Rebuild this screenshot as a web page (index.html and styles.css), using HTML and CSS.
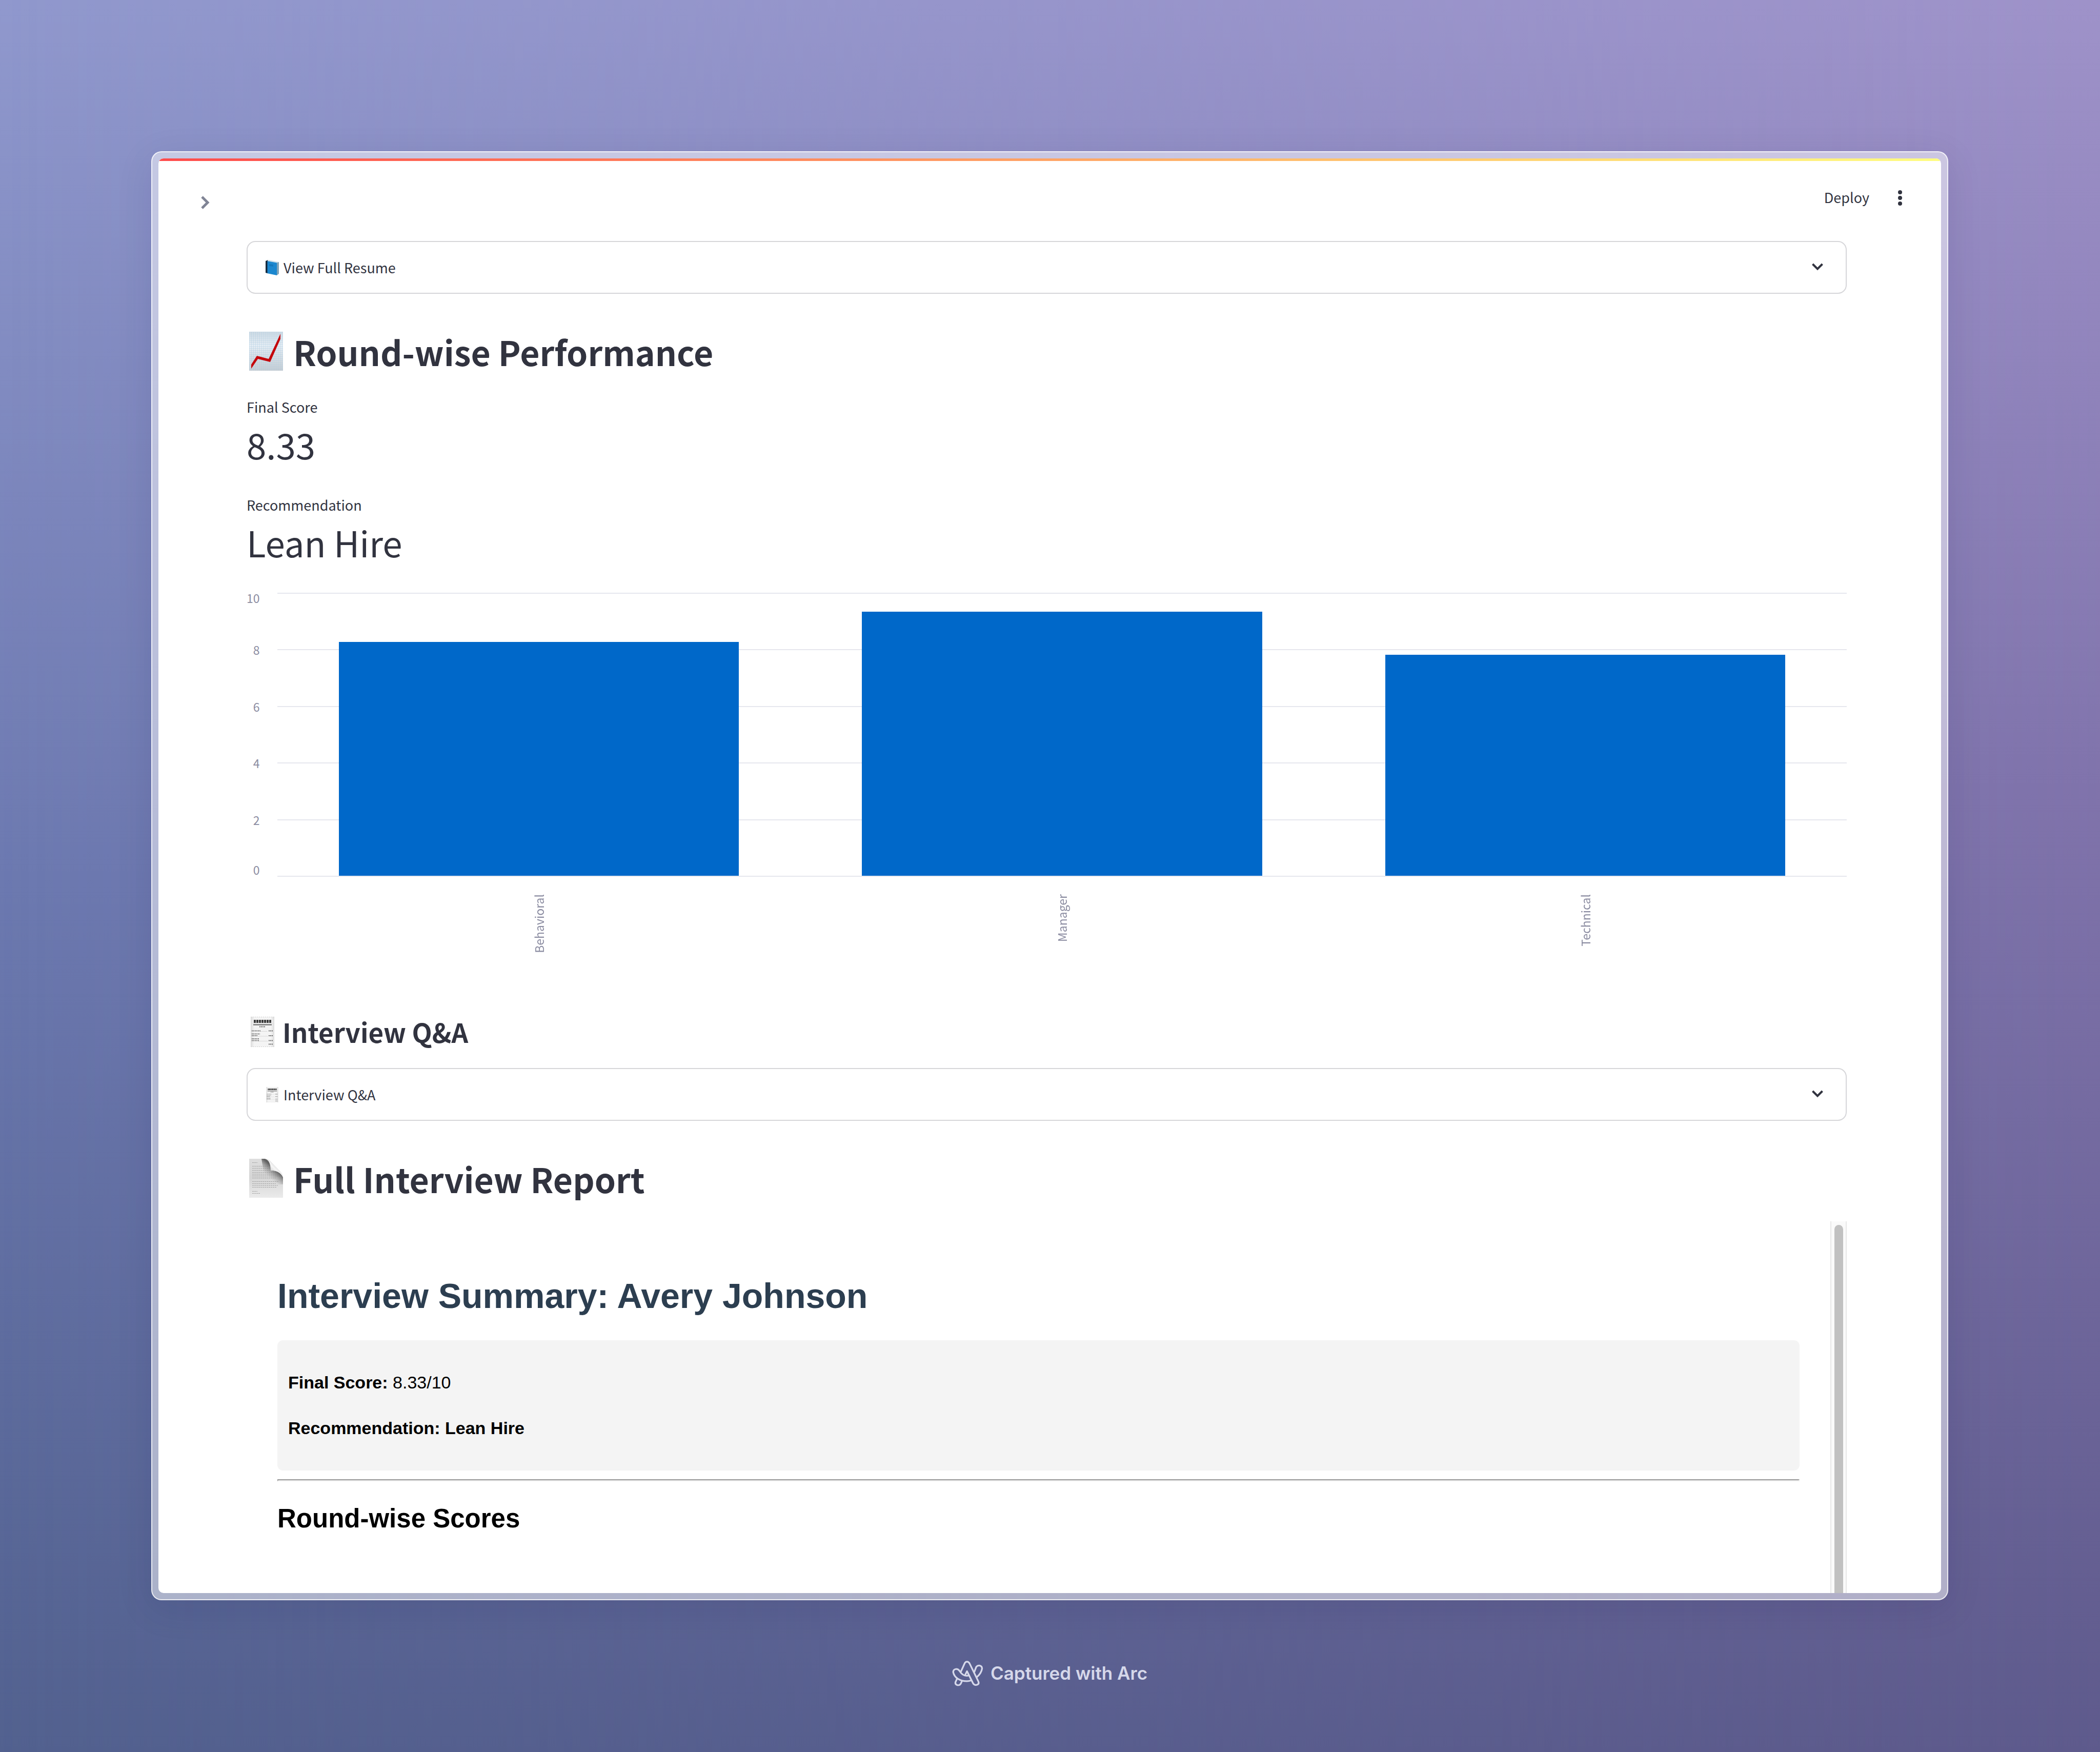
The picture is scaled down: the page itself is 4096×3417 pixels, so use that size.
FILE: index.html
```html
<!DOCTYPE html>
<html lang="en">
<head>
<meta charset="utf-8">
<title>Interview Report</title>
<link rel="stylesheet" href="styles.css">
</head>
<body class="backdrop">
<svg class="defs" aria-hidden="true">
  <defs>
    <linearGradient id="paper" x1="0" y1="0" x2="0" y2="1"><stop offset="0" stop-color="#dedede"/><stop offset=".5" stop-color="#d6d6d6"/><stop offset="1" stop-color="#ebebeb"/></linearGradient>
    <linearGradient id="grid-paper" x1="0" y1="0" x2="0" y2="1"><stop offset="0" stop-color="#cfdbe4"/><stop offset=".35" stop-color="#e6eef5"/><stop offset="1" stop-color="#c6cdd3"/></linearGradient>
    <linearGradient id="slip" x1="0" y1="0" x2="1" y2="0"><stop offset="0" stop-color="#dcdcdc"/><stop offset=".15" stop-color="#f4f4f4"/><stop offset=".85" stop-color="#f4f4f4"/><stop offset="1" stop-color="#dcdcdc"/></linearGradient>
    <linearGradient id="fold" x1="42" y1="23" x2="53" y2="12" gradientUnits="userSpaceOnUse"><stop offset="0" stop-color="#d4d4d4"/><stop offset=".5" stop-color="#f6f6f6"/><stop offset="1" stop-color="#dcdcdc"/></linearGradient>
    <linearGradient id="fold-shade" x1="49" y1="19" x2="36" y2="34" gradientUnits="userSpaceOnUse"><stop offset="0" stop-color="#555" stop-opacity=".9"/><stop offset=".45" stop-color="#777" stop-opacity=".5"/><stop offset="1" stop-color="#999" stop-opacity="0"/></linearGradient>
    <pattern id="squares" width="4" height="4" patternUnits="userSpaceOnUse"><path d="M0 0H4M0 0V4" stroke="#a9c9e0" stroke-width="1"/></pattern>
    <symbol id="receipt" viewBox="0 0 46 59">
      <rect width="46" height="59" fill="url(#slip)"/>
      <path d="M0 .5H46M0 58.5H46" stroke="#cfcfcf" stroke-dasharray="2 2"/>
      <path d="M5 15.500H41" stroke="#8f8f8f" stroke-width="3"/>
      <g stroke="#3c3c3c" fill="none"><path d="M6 9H40" stroke-width="6" stroke-dasharray="4 1"/><path d="M17 19.500H28" stroke-width="2" stroke-dasharray="2 1" stroke="#666"/></g>
      <g stroke="#777" stroke-width="2" stroke-dasharray="2 1"><path d="M2 27.500H19M2 33.500H18M2 37H14M2 43H16M2 46.500H16"/><path d="M35 27.500H43M35 37H43M35 46.500H43M35 53.500H43" stroke="#666"/></g>
      <path d="M19 28.500H33M14 38H33M16 47.500H33" stroke="#bbb" stroke-dasharray="1 1"/>
    </symbol>
    <symbol id="chevron-down" viewBox="0 0 40 40"><path d="M10.500 13L20 22.500L29.500 13" fill="none" stroke="currentColor" stroke-width="4"/></symbol>
  </defs>
</svg>

<div class="window">
  <div class="page">
    <header class="toolbar">
      <button class="toggle" aria-label="Open sidebar"><svg class="glyph" viewBox="0 0 40 40"><path d="M14 9L25 20L14 31" fill="none" stroke="currentColor" stroke-width="5"/></svg></button>
      <div class="actions">
        <button class="deploy">Deploy</button>
        <button class="menu" aria-label="Main menu"><svg class="glyph" viewBox="0 0 40 40" fill="currentColor"><circle cx="20" cy="10" r="4"/><circle cx="20" cy="21" r="4"/><circle cx="20" cy="32" r="4"/></svg></button>
      </div>
    </header>

    <main class="content">
      <button class="expander">
        <svg class="expander-icon" viewBox="0 0 26 30"><path d="M3 2L7 0L26 4L22 6Z" fill="#cfe0ea"/><path d="M22 5.500L26 4V27L22 30Z" fill="#7fa3b8"/><path d="M3 2L22 5.500V30L3 26Z" fill="#1b87cf"/><path d="M7 9L15 10M7 11L15 12" stroke="#0f6bab" stroke-width="1"/><path d="M0 2L5 0L3.500 2.500V26L0 25Z" fill="#14293d"/></svg>
        <span class="expander-label">View Full Resume</span>
        <svg class="glyph"><use href="#chevron-down"/></svg>
      </button>

      <h1 class="title">
        <svg class="title-icon" viewBox="0 0 66 76"><rect width="66" height="76" fill="url(#grid-paper)"/><rect width="66" height="76" fill="url(#squares)" opacity=".8"/><path d="M4 64L15 47L38 53L61 4V14L41 59L17 53L4 72Z" fill="#c4070c"/></svg>
        <span>Round-wise Performance</span>
      </h1>

      <dl class="metrics">
        <div class="metric"><dt>Final Score</dt><dd>8.33</dd></div>
        <div class="metric"><dt>Recommendation</dt><dd>Lean Hire</dd></div>
      </dl>

      <figure class="chart">
        <div class="ticks"><span>10</span><span>8</span><span>6</span><span>4</span><span>2</span><span>0</span></div>
        <div class="plot">
          <div class="lines"><i></i><i></i><i></i><i></i><i></i><i></i></div>
          <div class="bars">
            <div class="bar" style="height:82.7%"></div>
            <div class="bar" style="height:93.3%"></div>
            <div class="bar" style="height:78.1%"></div>
          </div>
        </div>
        <div class="names"><span>Behavioral</span><span>Manager</span><span>Technical</span></div>
      </figure>

      <h2 class="subtitle">
        <svg class="subtitle-icon"><use href="#receipt"/></svg>
        <span>Interview Q&amp;A</span>
      </h2>
      <button class="expander">
        <svg class="expander-icon"><use href="#receipt"/></svg>
        <span class="expander-label">Interview Q&amp;A</span>
        <svg class="glyph"><use href="#chevron-down"/></svg>
      </button>

      <h1 class="title">
        <svg class="title-icon" viewBox="0 0 66 76"><path d="M0 0H31Q42 3 42 22.500Q60 23 66 36V76H0Z" fill="url(#paper)"/>
          <g stroke="#a4a4a4" stroke-width="1"><path d="M6 7.500H16M6 14.500H38M6 18.500H40M6 22.500H40M6 26.500H56M6 30H60M6 33.500H60M6 37.500H52M6 44.500H58M6 48.500H52M6 52H56M6 55.500H54M6 63.500H16M6 67.500H22" stroke-dasharray="3 1"/></g>
          <path d="M24 0H31Q42 3 42 22.500Q60 23 66 36V50H32Z" fill="url(#fold-shade)"/><path d="M31 0Q42 3 42 22.500Q60 23 66 36Q66 30 62 26L41 4Q37 0 31 0Z" fill="url(#fold)"/></svg>
        <span>Full Interview Report</span>
      </h1>

      <section class="report">
        <div class="report-body">
          <h1 class="report-title">Interview Summary: Avery Johnson</h1>
          <div class="summary">
            <p><strong>Final Score:</strong> 8.33/10</p>
            <p><strong>Recommendation: Lean Hire</strong></p>
          </div>
          <hr class="rule">
          <h2 class="report-heading">Round-wise Scores</h2>
        </div>
        <div class="scroll-track"><div class="scroll-thumb"></div></div>
      </section>
    </main>
  </div>
</div>

<footer class="credit">
  <svg class="arc-logo" viewBox="82 118 220 192" preserveAspectRatio="none" fill="none" stroke="currentColor" stroke-width="12" stroke-linejoin="round" stroke-linecap="round">
    <path d="M144 202L168 147Q174 129 187 129Q200 129 207 146L266 272Q275 290 259 298Q241 305 231 290L187 199L176 222"/>
    <path d="M134 196Q124 181 108 183Q90 187 90 206Q96 236 122 254Q152 273 187 272Q202 272 214 267"/>
    <path d="M134 196Q155 232 185 232Q192 232 198 230"/>
    <path d="M117 254L106 279Q102 296 120 301Q137 304 144 289L152 270"/>
    <path d="M239 203L252 167Q261 155 275 157Q293 161 293 179Q288 214 256 242"/>
  </svg>
  <span>Captured with Arc</span>
</footer>
</body>
</html>
```
FILE: styles.css
```css
* { box-sizing: border-box; }

.backdrop {
  margin: 0;
  min-height: 100vh;
  display: flex;
  flex-direction: column;
  padding: 295px 296px 0 295px;
  font-family: "Noto Sans CJK SC", "Noto Sans", sans-serif;
  font-size: 27px;
  line-height: 40px;
  color: #31333f;
  background: linear-gradient(to bottom, #9098cd 0%, #6c79b0 50%, #52618f 100%);
  position: relative;
}
.backdrop::before {
  content: "";
  position: absolute;
  inset: 0;
  z-index: -1;
  background: linear-gradient(to bottom, #9e92c9 0%, #8073ab 45%, #5e5a8c 100%);
  -webkit-mask-image: linear-gradient(to right, transparent, #000);
  mask-image: linear-gradient(to right, transparent, #000);
}
.defs { position: absolute; width: 0; height: 0; }

button {
  margin: 0;
  padding: 0;
  border: 0;
  background: none;
  font: inherit;
  color: inherit;
  text-align: left;
}
h1, h2, p, dl, dd, figure { margin: 0; }

.window {
  flex: 1;
  display: flex;
  padding: 12px;
  border: 2px solid rgba(255, 255, 255, .75);
  border-radius: 20px;
  background: rgba(255, 255, 255, .5);
  box-shadow: 0 16px 70px rgba(20, 20, 70, .1);
}
.page {
  flex: 1;
  display: flex;
  flex-direction: column;
  background: #fff;
  border-radius: 10px;
  overflow: hidden;
}
.page::before {
  content: "";
  height: 5px;
  background: linear-gradient(90deg, #ff4b4b, #fffd80);
}

.toolbar {
  display: flex;
  justify-content: space-between;
  align-items: flex-start;
  height: 156px;
  padding: 51px 60px 0 71px;
}
.toggle { display: flex; align-items: center; height: 60px; color: #808495; }
.actions { display: flex; gap: 40px; }
.menu { display: flex; }
.glyph { display: block; width: 40px; height: 40px; }

.content {
  flex: 1;
  display: flex;
  flex-direction: column;
  padding: 0 184px 0 172px;
}

.expander {
  display: flex;
  align-items: center;
  gap: 9px;
  height: 103px;
  padding: 0 35px;
  border: 2px solid #d6d6d9;
  border-radius: 17px;
}
.expander-icon { width: 26px; height: 30px; }
.expander-label { flex: 1; }

.title {
  display: flex;
  align-items: center;
  gap: 20px;
  margin-top: 72px;
  padding-left: 5px;
  font-size: 66px;
  line-height: 80px;
  font-weight: 700;
}
.title-icon { width: 66px; height: 76px; }

.metrics { display: flex; flex-direction: column; gap: 57px; margin-top: 49px; }
.metric { display: flex; flex-direction: column; gap: 10px; }
.metric dd { font-size: 69px; line-height: 84px; }

.chart {
  display: grid;
  grid-template-columns: 60px 1fr;
  margin-top: 57px;
  font-size: 23px;
  line-height: 20px;
  color: #8b8ca1;
}
.ticks {
  display: grid;
  grid-template-rows: 1fr 2fr 2fr 2fr 2fr 1fr;
  align-items: center;
  justify-items: end;
  padding-right: 35px;
}
.ticks span:first-child { align-self: start; }
.ticks span:last-child { align-self: end; padding-bottom: 4px; }
.plot { display: grid; height: 554px; }
.lines, .bars { grid-area: 1 / 1; }
.lines { display: flex; flex-direction: column; justify-content: space-between; }
.lines i { height: 2px; background: #e6e7ee; }
.bars {
  display: grid;
  grid-template-columns: repeat(3, 1fr);
  align-items: end;
  justify-items: center;
  height: 552px;
}
.bar { width: 76.5%; background: #0068c9; }
.names {
  grid-column: 2;
  display: grid;
  grid-template-columns: repeat(3, 1fr);
  justify-items: center;
  align-items: start;
  height: 270px;
  padding-top: 34px;
}
.names span { writing-mode: vertical-rl; transform: rotate(180deg); }

.subtitle {
  display: flex;
  align-items: center;
  gap: 16px;
  margin-bottom: 39px;
  padding-left: 8px;
  font-size: 51px;
  line-height: 64px;
  font-weight: 700;
}
.subtitle-icon { width: 46px; height: 59px; }

.report {
  flex: 1;
  display: flex;
  margin-top: 44px;
  font-family: "Liberation Sans", Arial, sans-serif;
  font-size: 34px;
  color: #000;
}
.report-body { flex: 1; padding: 105px 60px 0; }
.report-title { font-size: 68px; line-height: 80px; color: #2c3e50; }
.summary {
  display: flex;
  flex-direction: column;
  gap: 49px;
  margin-top: 47px;
  padding: 62px 21px 63px;
  border-radius: 11px;
  background: #f4f4f4;
}
.rule {
  height: 4px;
  margin: 17px 0 43px;
  border: 2px solid;
  border-color: #9a9a9a #eee #eee #9a9a9a;
}
.report-heading { font-size: 51px; line-height: 60px; }
.scroll-track {
  width: 32px;
  padding: 7px 5px 0 6px;
  display: flex;
  background: #fafafa;
  border: 2px solid #e8e8e8;
  border-width: 0 2px;
}
.scroll-thumb { flex: 1; border-radius: 9px 9px 0 0; background: #c1c1c1; }

.credit {
  display: flex;
  justify-content: center;
  align-items: center;
  gap: 14px;
  height: 296px;
  padding-bottom: 12px;
  font-family: Inter, sans-serif;
  font-size: 35px;
  font-weight: 600;
  color: #d6d8ea;
}
.arc-logo { width: 61px; height: 51px; }
```
